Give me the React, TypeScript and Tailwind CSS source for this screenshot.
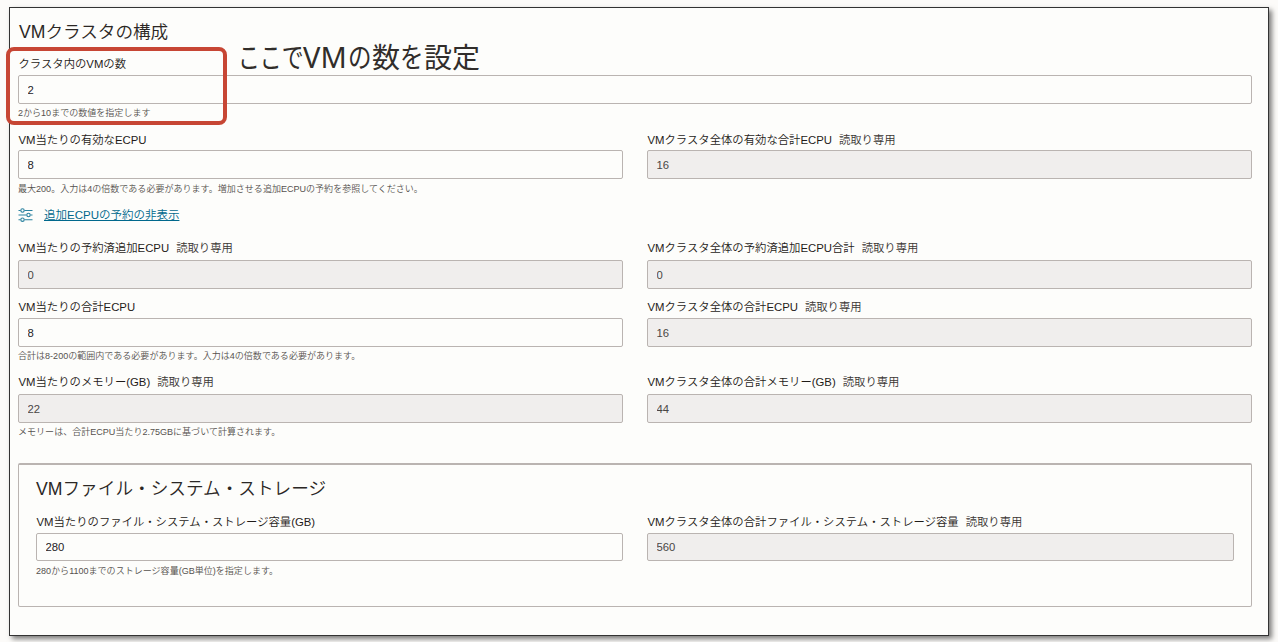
import type { ReactNode } from "react";
import { clsx } from "clsx";

interface FieldProps {
  label: string;
  value: string;
  help?: string;
  readOnly?: boolean;
  // space between label and input
  gap?: string;
  height?: string;
  helpGap?: string;
}

function Field({
  label,
  value,
  help,
  readOnly,
  gap = "mt-[3px]",
  height = "h-[29px]",
  helpGap = "mt-1",
}: FieldProps) {
  return (
    <label className="block min-w-0">
      <span className="flex h-4 gap-[7px] whitespace-nowrap pl-[0.5px] text-[11.35px] leading-4 text-[#1f1b18]">
        <span>{label}</span>
        {readOnly && <span className="text-[#3a3633]">読取り専用</span>}
      </span>
      <input
        type="text"
        defaultValue={value}
        readOnly={readOnly}
        className={clsx(
          "block w-full rounded-[2px] border border-[#bab4b1] px-[8.5px] text-[11.3px] outline-none",
          readOnly ? "bg-[#f0eeed] text-[#4a4644]" : "bg-transparent text-[#26221f]",
          gap,
          height,
        )}
      />
      {help && (
        <span
          className={clsx(
            "block h-3 whitespace-nowrap text-[9.04px] leading-3 text-[#55514e]",
            helpGap,
          )}
        >
          {help}
        </span>
      )}
    </label>
  );
}

function Row({ className, children }: { className: string; children: ReactNode }) {
  return <div className={clsx("grid grid-cols-2 gap-6", className)}>{children}</div>;
}

function SlidersIcon() {
  return (
    <svg width="15" height="14" viewBox="0 0 15 14" fill="none" stroke="#2b82a0" strokeWidth="1.1">
      <path d="M0.5 2.5h2M6.5 2.5h8M0.5 7h8M12.5 7h2M0.5 11.7h2M6.5 11.7h8" />
      <circle cx="4.5" cy="2.5" r="1.7" />
      <circle cx="10.5" cy="7" r="1.7" />
      <circle cx="4.5" cy="11.7" r="1.7" />
    </svg>
  );
}

export default function App() {
  return (
    <div className="relative h-[642px] w-[1278px] overflow-hidden bg-[#fcfbf9] pl-[9px] pt-[7px] font-['Liberation_Sans','Noto_Sans_CJK_JP',sans-serif] font-[350]">
      <section className="h-[629px] w-[1260px] border border-[#333] bg-[#fdfdfb] pl-2 pr-4 pt-3 shadow-[3px_3px_5px_rgba(0,0,0,0.5)]">
        <h1 className="h-6 whitespace-nowrap pl-px text-[17.6px] leading-6 text-[#2b2724]">VMクラスタの構成</h1>

        <div className="mt-3">
          <Field
            label="クラスタ内のVMの数"
            value="2"
            help="2から10までの数値を指定します"
            helpGap="mt-[3px]"
          />
        </div>

        <Row className="mt-[13px]">
          <Field
            label="VM当たりの有効なECPU"
            value="8"
            help="最大200。入力は4の倍数である必要があります。増加させる追加ECPUの予約を参照してください。"
            gap="mt-[2px]"
          />
          <Field label="VMクラスタ全体の有効な合計ECPU" value="16" readOnly gap="mt-[2px]" />
        </Row>

        <a href="#" className="mt-3 flex h-4 w-fit items-center gap-[11px] whitespace-nowrap text-[11.5px] leading-4 text-[#00688c]">
          <SlidersIcon />
          <span className="underline underline-offset-1">追加ECPUの予約の非表示</span>
        </a>

        <Row className="mt-[17px]">
          <Field label="VM当たりの予約済追加ECPU" value="0" readOnly gap="mt-1" />
          <Field label="VMクラスタ全体の予約済追加ECPU合計" value="0" readOnly gap="mt-1" />
        </Row>

        <Row className="mt-[10px]">
          <Field
            label="VM当たりの合計ECPU"
            value="8"
            help="合計は8-200の範囲内である必要があります。入力は4の倍数である必要があります。"
            helpGap="mt-[3px]"
          />
          <Field label="VMクラスタ全体の合計ECPU" value="16" readOnly />
        </Row>

        <Row className="mt-3">
          <Field
            label="VM当たりのメモリー(GB)"
            value="22"
            help="メモリーは、合計ECPU当たり2.75GBに基づいて計算されます。"
            readOnly
            gap="mt-1"
            helpGap="mt-[3px]"
          />
          <Field label="VMクラスタ全体の合計メモリー(GB)" value="44" readOnly gap="mt-1" />
        </Row>

        <section className="mt-[25px] h-[144px] rounded-[2px] border border-t-2 border-[#bab4b1] px-[17px] pt-3">
          <h2 className="h-6 whitespace-nowrap text-[17.65px] leading-6 text-[#2b2724]">
            VMファイル・システム・ストレージ
          </h2>
          <Row className="mt-[13px]">
            <Field
              label="VM当たりのファイル・システム・ストレージ容量(GB)"
              value="280"
              help="280から1100までのストレージ容量(GB単位)を指定します。"
              height="h-7"
            />
            <Field
              label="VMクラスタ全体の合計ファイル・システム・ストレージ容量"
              value="560"
              readOnly
              height="h-7"
            />
          </Row>
        </section>
      </section>

      {/* callout over the VM count field */}
      <div className="absolute left-[6px] top-[47px] h-[78px] w-[221px] rounded-[8px] border-4 border-[#c74634]" />
      <p className="absolute left-[238px] top-[40px] flex whitespace-nowrap font-['Noto_Sans','Noto_Sans_CJK_JP',sans-serif] text-[28px] font-normal leading-[34px] text-[#312d2a]">
        <span className="w-[65px] origin-left scale-x-[0.78]">ここで</span>
        <span className="w-[45px] text-[29px]">VM</span>
        <span className="w-[24px] origin-left scale-x-[0.84]">の</span>
        <span className="w-[28px]">数</span>
        <span className="w-[24px] origin-left scale-x-[0.84]">を</span>
        <span>設定</span>
      </p>
    </div>
  );
}
